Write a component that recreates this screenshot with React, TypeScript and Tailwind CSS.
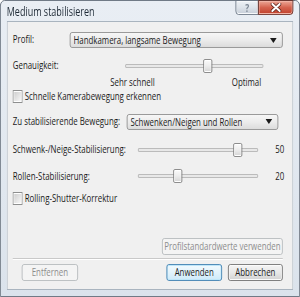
import type { ReactNode } from "react"

const MAX = 60

function Arrow() {
  return (
    <svg width="9" height="5" viewBox="0 0 9 5" className="shrink-0">
      <path d="M0 0h9L4.5 5z" fill="#1a1a1a" />
    </svg>
  )
}

function Dropdown({ value, className }: { value: string; className: string }) {
  return (
    <div
      className={`flex h-[16px] items-center justify-between rounded-[3px] border border-[#8e8e8e] bg-linear-to-b from-[#f6f6f6] via-[#ececec] to-[#dcdcdc] pl-[4px] pr-[7px] ${className}`}
    >
      <span className="truncate leading-[14px]">{value}</span>
      <Arrow />
    </div>
  )
}

function Slider({ value, className }: { value: number; className: string }) {
  return (
    <div className={`relative h-[14px] shrink-0 ${className}`}>
      {/* track */}
      <div className="absolute left-0 right-0 top-[5px] h-[4px] rounded-[1px] border border-[#b4b4b4] bg-[#e8e8e8]" />
      {/* thumb */}
      <div
        className="absolute top-0 h-[14px] w-[12px] rounded-[2px] border border-[#7f7f7f] bg-linear-to-b from-[#fbfbfb] via-[#ececec] to-[#d4d4d4] shadow-[inset_0_0_0_1px_#ffffff]"
        style={{ left: `calc(${(value / MAX) * 100}% - 6px)` }}
      />
    </div>
  )
}

function Check({ label }: { label: string }) {
  return (
    <div className="flex h-[13px] items-center gap-[3px]">
      <div className="h-[13px] w-[13px] shrink-0 border border-[#8e8f8f] bg-white p-[1px]">
        <div className="h-full w-full bg-linear-to-br from-[#cfcfcf] to-[#f7f7f7]" />
      </div>
      <span className="leading-[13px]">{label}</span>
    </div>
  )
}

function Button({
  children,
  className,
  kind = "normal",
}: {
  children: ReactNode
  className: string
  kind?: "normal" | "default" | "disabled"
}) {
  const look =
    kind === "disabled"
      ? "border-[#b5b9bc] bg-[#f4f4f4] text-[#8d8d8d]"
      : kind === "default"
        ? "border-[#3c7fb1] bg-linear-to-b from-[#f2fafe] via-[#e2f3fc] to-[#cdeafa] shadow-[inset_0_0_0_1px_#bfe6f9]"
        : "border-[#707070] bg-linear-to-b from-[#f4f4f4] via-[#e8e8e8] to-[#d2d2d2] shadow-[inset_0_0_0_1px_#fbfbfb]"
  return (
    <div
      className={`flex h-[17px] shrink-0 items-center justify-center rounded-[3px] border leading-[15px] ${look} ${className}`}
    >
      {children}
    </div>
  )
}

export default function App() {
  return (
    <div className="h-[297px] w-[300px] overflow-hidden bg-white">
      {/* the reference is squeezed horizontally to 3/4, so build at 400px and scale */}
      <div className="flex h-[297px] w-[400px] origin-top-left scale-x-75 flex-col rounded-t-[6px] border border-[#5b6775] bg-linear-to-b from-[#e9eef4] to-[#dbe3ec] px-[8px] pb-[6px] font-['Open_Sans','Noto_Sans',sans-serif] text-[10.5px] text-[#1b1b1b]">
        {/* Title bar */}
        <div className="flex h-[20px] shrink-0 items-start justify-between">
          <span className="mt-[4px] text-[12px] leading-[14px] text-[#1e2a36]">Medium stabilisieren</span>
          <div className="-mt-px flex">
            <div className="flex h-[15px] w-[31px] items-center justify-center rounded-bl-[4px] border border-[#6d7886] bg-linear-to-b from-[#eef2f6] via-[#dde3ea] to-[#c6ced8] text-[11px] font-bold leading-none text-[#7c8794] shadow-[inset_0_0_0_1px_#f7f9fb]">
              ?
            </div>
            <div className="-ml-px flex h-[15px] w-[47px] items-center justify-center rounded-br-[4px] border border-[#6b2d24] bg-linear-to-b from-[#eca797] via-[#d5634f] to-[#c0402c] shadow-[inset_0_0_0_1px_#f0b3a5]">
              <svg width="16" height="9" viewBox="0 0 16 9">
                <path d="M3 1l10 7M13 1L3 8" stroke="#5a1f17" strokeWidth="4" strokeLinecap="round" />
                <path d="M3 1l10 7M13 1L3 8" stroke="#ffffff" strokeWidth="2.2" strokeLinecap="round" />
              </svg>
            </div>
          </div>
        </div>

        {/* Client area */}
        <div className="flex min-h-0 flex-1 flex-col border border-[#a9b4bf] bg-[#f0f0f0] pb-[8px] pl-[7px] pr-[13px]">
          <div className="mt-[10px] flex items-center">
            <span className="w-[76px] shrink-0">Profil:</span>
            <Dropdown value="Handkamera, langsame Bewegung" className="flex-1" />
          </div>

          <div className="mt-[10px] flex items-center">
            <span className="w-[150px] shrink-0">Genauigkeit:</span>
            <Slider value={36} className="w-[184px]" />
          </div>
          <div className="mt-[2px] flex h-[12px] items-center pl-[130px] leading-[12px]">
            <span className="w-[162px] shrink-0">Sehr schnell</span>
            <span>Optimal</span>
          </div>

          <div className="mt-[2px]">
            <Check label="Schnelle Kamerabewegung erkennen" />
          </div>

          <div className="mt-[11px] flex items-center">
            <span className="w-[152px] shrink-0">Zu stabilisierende Bewegung:</span>
            <Dropdown value="Schwenken/Neigen und Rollen" className="w-[202px]" />
          </div>

          <div className="mt-[12px] flex items-center">
            <span className="w-[167px] shrink-0">Schwenk-/Neige-Stabilisierung:</span>
            <Slider value={50} className="w-[160px]" />
            <span className="ml-[20px] w-[15px] shrink-0 text-right">50</span>
          </div>

          <div className="mt-[11px] flex items-center">
            <span className="w-[167px] shrink-0">Rollen-Stabilisierung:</span>
            <Slider value={20} className="w-[160px]" />
            <span className="ml-[20px] w-[15px] shrink-0 text-right">20</span>
          </div>

          <div className="mt-[8px]">
            <Check label="Rolling-Shutter-Korrektur" />
          </div>

          <div className="flex-1" />

          <Button kind="disabled" className="w-[161px] self-end">
            Profilstandardwerte verwenden
          </Button>

          <div className="mt-[3px] border-t border-b border-t-[#c9c9c9] border-b-white" />

          <div className="mt-[4px] flex">
            <Button kind="disabled" className="ml-[12px] w-[75px]">
              Entfernen
            </Button>
            <div className="flex-1" />
            <Button kind="default" className="w-[74px]">
              Anwenden
            </Button>
            <Button className="ml-[8px] w-[73px]">Abbrechen</Button>
          </div>
        </div>
      </div>
    </div>
  )
}
